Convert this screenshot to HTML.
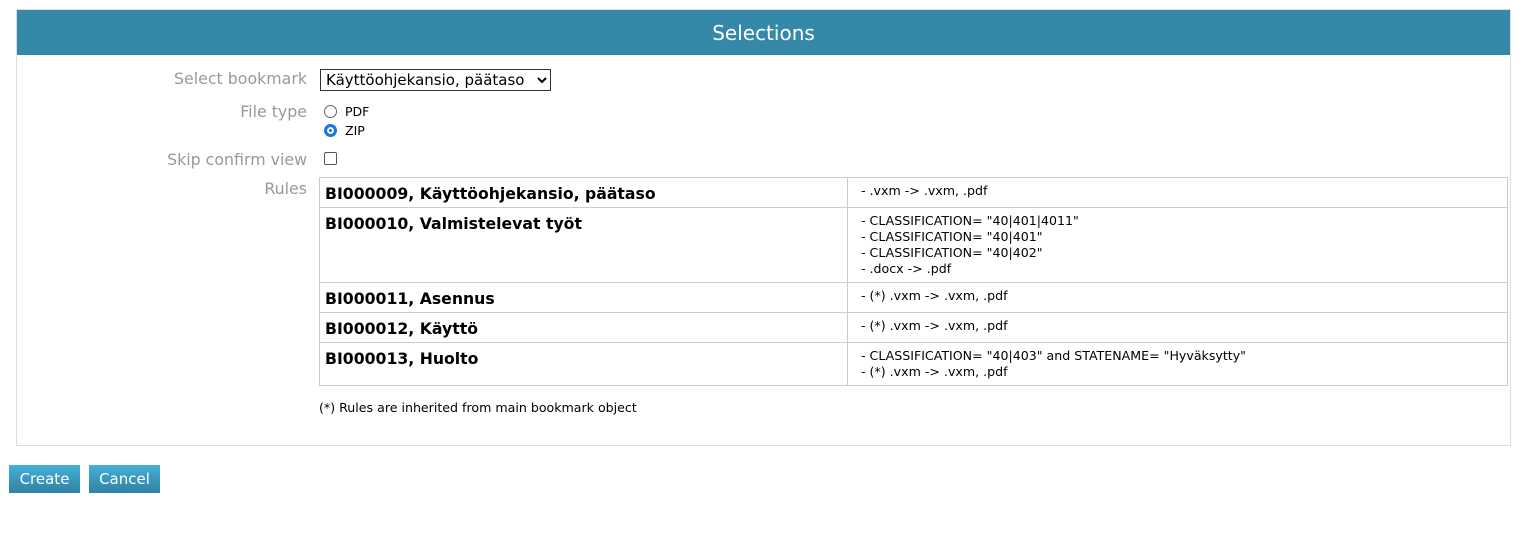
<!DOCTYPE html>
<html><head><meta charset="utf-8"><style>
body{margin:0;background:#fff;font-family:"DejaVu Sans",sans-serif;width:1527px;height:534px;position:relative;overflow:hidden}
.panel{position:absolute;left:16px;top:9px;width:1493px;height:435px;border:1px solid #ddd}
.hdr{position:absolute;left:0;top:0;width:1493px;height:45px;background:#3589a8;color:#fff;font-size:20px;text-align:center;line-height:47px}
.lbl{position:absolute;right:1203px;color:#999;font-size:15.8px;white-space:nowrap}
.abs{position:absolute;white-space:nowrap}
select{position:absolute;left:303px;top:59px;width:231px;height:22px;font-family:"DejaVu Sans",sans-serif;font-size:15px;border:1px solid #333;background:#fff;padding:0 1px;border-radius:0}
table{position:absolute;left:302px;top:167px;width:1189px;border-collapse:collapse;table-layout:fixed}
td{border:1px solid #ccc;vertical-align:top;padding:0}
td.a{width:517px;font-weight:bold;font-size:15.7px;padding:6px 5px 0}
td.b{font-size:12.6px;padding:5px 0 0 13px;line-height:16px}
.btn{position:absolute;top:465px;height:28px;background:linear-gradient(#44b0d8,#3182a2);color:#fff;font-size:15px;line-height:29px;text-align:center}
</style></head><body>
<div class="panel">
<div class="hdr">Selections</div>
<div class="lbl" style="top:59px">Select bookmark</div>
<select><option>Käyttöohjekansio, päätaso</option></select>
<div class="lbl" style="top:92px">File type</div>
<div class="abs" style="left:307px;top:94px;font-size:12.5px"><span style="display:inline-block;width:11px;height:11px;border:1px solid #666;border-radius:50%;vertical-align:-2px;margin-right:8px"></span>PDF</div>
<div class="abs" style="left:307px;top:113px;font-size:12.5px"><span style="display:inline-block;width:7px;height:7px;border:3px solid #1a73e8;border-radius:50%;background:#1a73e8;box-shadow:inset 0 0 0 2px #fff;vertical-align:-2px;margin-right:8px"></span>ZIP</div>
<div class="lbl" style="top:140px">Skip confirm view</div>
<div class="abs" style="left:307px;top:142px;width:11px;height:11px;border:1px solid #555;border-radius:2px"></div>
<div class="lbl" style="top:169px">Rules</div>
<table>
<tr style="height:30px"><td class="a">BI000009, Käyttöohjekansio, päätaso</td><td class="b">- .vxm -&gt; .vxm, .pdf</td></tr>
<tr style="height:75px"><td class="a">BI000010, Valmistelevat työt</td><td class="b">- CLASSIFICATION= "40|401|4011"<br>- CLASSIFICATION= "40|401"<br>- CLASSIFICATION= "40|402"<br>- .docx -&gt; .pdf</td></tr>
<tr style="height:30px"><td class="a">BI000011, Asennus</td><td class="b">- (*) .vxm -&gt; .vxm, .pdf</td></tr>
<tr style="height:30px"><td class="a">BI000012, Käyttö</td><td class="b">- (*) .vxm -&gt; .vxm, .pdf</td></tr>
<tr style="height:43px"><td class="a">BI000013, Huolto</td><td class="b">- CLASSIFICATION= "40|403" and STATENAME= "Hyväksytty"<br>- (*) .vxm -&gt; .vxm, .pdf</td></tr>
</table>
<div class="abs" style="left:302px;top:390px;font-size:12.6px">(*) Rules are inherited from main bookmark object</div>
</div>
<div class="btn" style="left:9px;width:71px">Create</div>
<div class="btn" style="left:89px;width:71px">Cancel</div>
</body></html>
